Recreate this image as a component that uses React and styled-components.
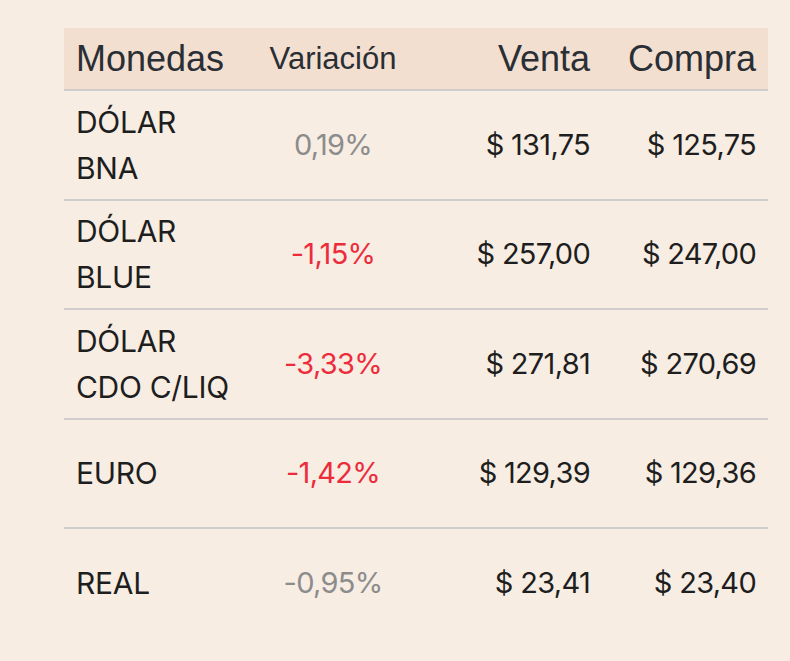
import React from 'react'
import styled, { createGlobalStyle } from 'styled-components'

const GlobalStyle = createGlobalStyle`
  body {
    margin: 0;
    background: #f7ede3;
    font-family: Inter, "Liberation Sans", sans-serif;
  }
`

const Page = styled.div`
  padding: 28px 22px 0 64px;
`

const Table = styled.div`
  display: grid;
  grid-template-columns: 186px 166px 186px 166px;
  width: 704px;
`

const HeadCell = styled.div`
  background: #f3dfcf;
  height: 61px;
  border-bottom: 2px solid #cfcccb;
  display: flex;
  align-items: center;
  justify-content: ${(p) => p.$align || 'flex-start'};
  padding: 0 12px;
  font-family: "Liberation Sans", Arial, sans-serif;
  font-size: ${(p) => (p.$small ? '31px' : '36px')};
  color: #2a2e35;
`

const Cell = styled.div`
  height: 107.5px;
  border-bottom: ${(p) => (p.$last ? 'none' : '2px solid #cfcccb')};
  display: flex;
  align-items: center;
  justify-content: ${(p) => p.$align || 'flex-start'};
  padding: 0 12px;
  font-size: 29px;
  line-height: 46px;
  color: ${(p) => p.$color || '#1e1e1e'};
  letter-spacing: -0.7px;
`

const Name = styled.div`
  text-transform: uppercase;
  font-size: 30px;
  letter-spacing: -0.3px;
`

const rates = [
  { name: ['Dólar', 'BNA'], change: '0,19%', trend: 'flat', sell: '$ 131,75', buy: '$ 125,75' },
  { name: ['Dólar', 'Blue'], change: '-1,15%', trend: 'down', sell: '$ 257,00', buy: '$ 247,00' },
  { name: ['Dólar', 'CDO C/LIQ'], change: '-3,33%', trend: 'down', sell: '$ 271,81', buy: '$ 270,69' },
  { name: ['Euro'], change: '-1,42%', trend: 'down', sell: '$ 129,39', buy: '$ 129,36' },
  { name: ['Real'], change: '-0,95%', trend: 'flat', sell: '$ 23,41', buy: '$ 23,40' },
]

const trendColor = {
  flat: '#8c8c8c',
  down: '#ec2c3b',
}

const App = () => {
  return (
    <>
      <GlobalStyle />
      <Page>
        <Table>
          <HeadCell>Monedas</HeadCell>
          <HeadCell $small $align="center">Variación</HeadCell>
          <HeadCell $align="flex-end">Venta</HeadCell>
          <HeadCell $align="flex-end">Compra</HeadCell>

          {rates.map((r, i) => {
            const last = i === rates.length - 1
            return (
              <React.Fragment key={r.name.join(' ')}>
                <Cell $last={last}>
                  <Name>
                    {r.name.map((line) => (
                      <div key={line}>{line}</div>
                    ))}
                  </Name>
                </Cell>
                <Cell $last={last} $align="center" $color={trendColor[r.trend]}>
                  {r.change}
                </Cell>
                <Cell $last={last} $align="flex-end">{r.sell}</Cell>
                <Cell $last={last} $align="flex-end">{r.buy}</Cell>
              </React.Fragment>
            )
          })}
        </Table>
      </Page>
    </>
  )
}

export default App
